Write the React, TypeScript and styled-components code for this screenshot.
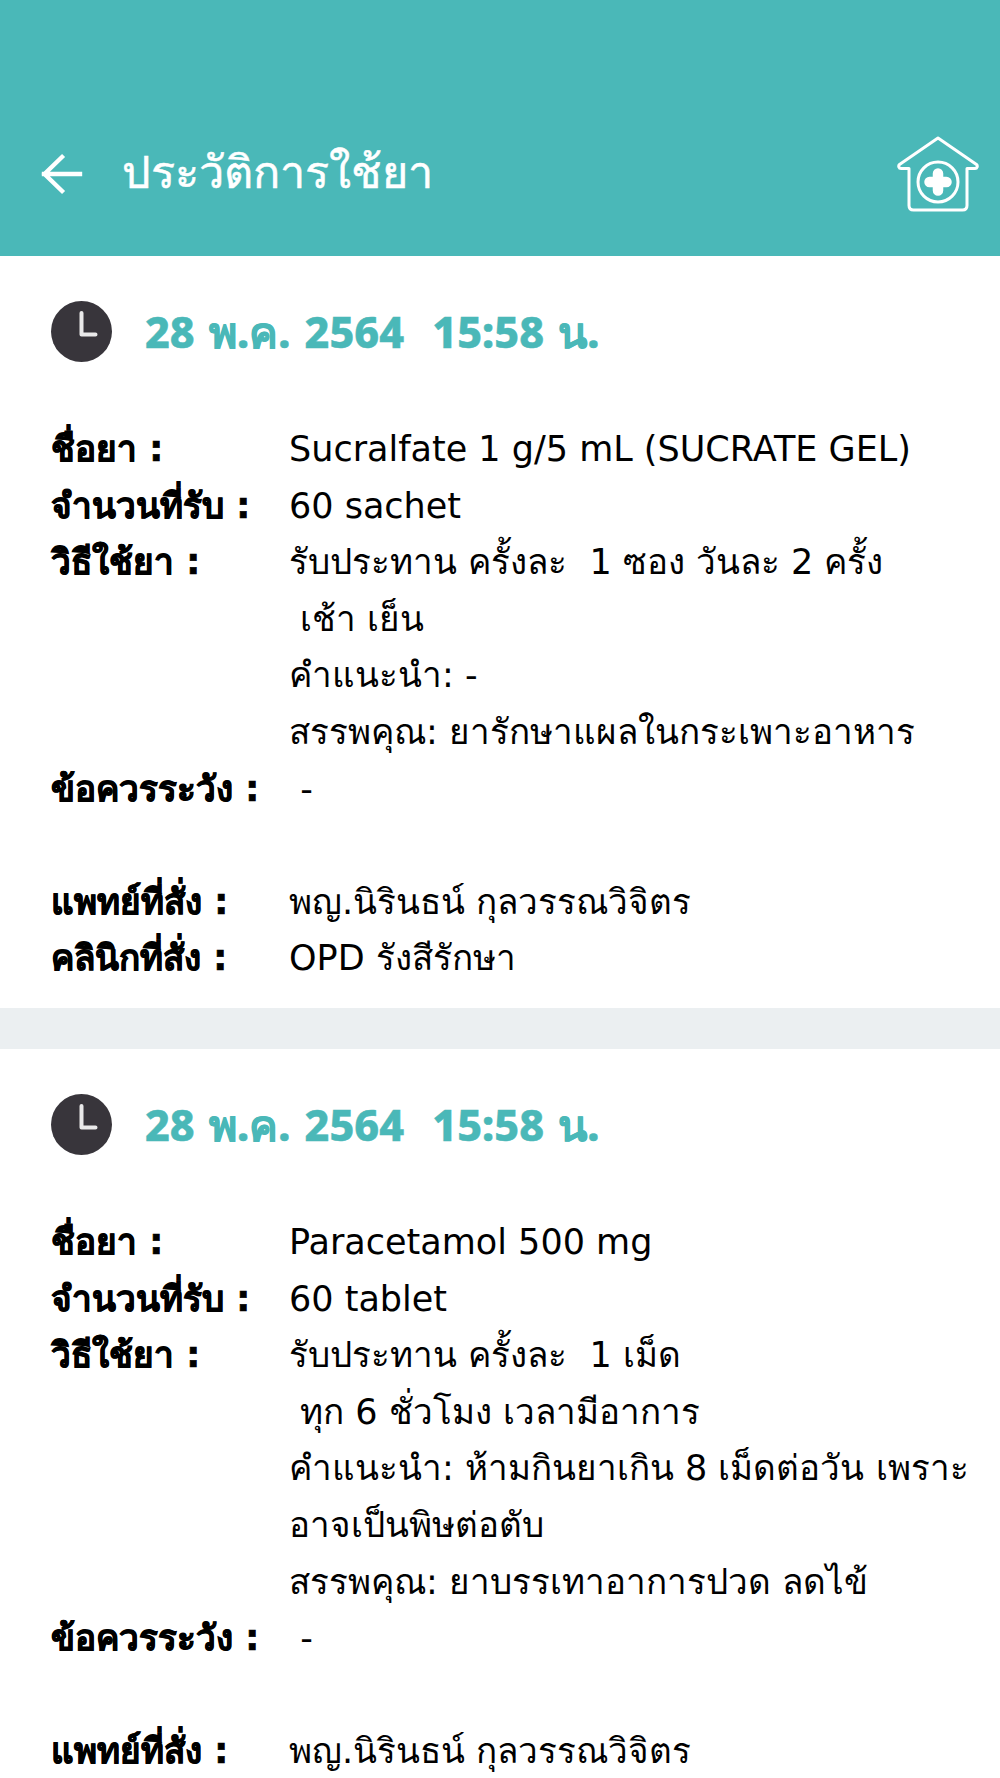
import styled, { createGlobalStyle } from 'styled-components';

const GlobalStyle = createGlobalStyle`
  html, body {
    margin: 0;
    padding: 0;
    background: #fff;
  }
  body {
    font-family: 'DejaVu Sans', 'Noto Sans', sans-serif;
    height: 1778px;
    overflow: hidden;
  }
`;

const Header = styled.header`
  display: flex;
  align-items: center;
  height: 256px;
  padding: 92px 21px 0 41px;
  box-sizing: border-box;
  background: #4ab8b8;
  color: #fff;
`;

const BackIcon = styled.svg`
  width: 42px;
  height: 42px;
  flex-shrink: 0;
`;

const Title = styled.h1`
  flex: 1;
  margin: 0 0 2px 39px;
  font-size: 45px;
  font-weight: 500;
  line-height: 64px;
  -webkit-text-stroke: 0.5px #fff;
`;

const HomeIcon = styled.svg`
  width: 82px;
  height: 76px;
  flex-shrink: 0;
`;

const Card = styled.section`
  padding: 45px 20px 21px 51px;
  background: #fff;
`;

const Divider = styled.div`
  height: 41px;
  background: #ebeff1;
`;

const DateRow = styled.div`
  display: flex;
  align-items: center;
  height: 61px;
  margin-bottom: 59px;
`;

const ClockIcon = styled.svg`
  width: 61px;
  height: 61px;
  flex-shrink: 0;
`;

const DateText = styled.div`
  margin-left: 33px;
  font-family: 'Noto Sans', sans-serif;
  font-size: 43px;
  font-weight: 800;
  line-height: 61px;
  word-spacing: 3px;
  color: #4ab8b8;
  white-space: pre;
  -webkit-text-stroke: 0.5px #4ab8b8;
`;

const Row = styled.div`
  display: grid;
  grid-template-columns: 238px 1fr;
  font-size: 35px;
  line-height: 56.6px;
  color: #000;
`;

const Label = styled.div`
  font-weight: 900;
  white-space: pre;
  -webkit-text-stroke: 0.7px #000;
`;

const Value = styled.div`
  font-weight: 400;
  white-space: pre;
`;

const Gap = styled.div`
  height: 56.6px;
`;

type Entry = {
  drug: string;
  amount: string;
  usage: string[];
  caution: string;
  doctor: string;
  clinic?: string;
};

const entries: Entry[] = [
  {
    drug: 'Sucralfate 1 g/5 mL (SUCRATE GEL)',
    amount: '60 sachet',
    usage: [
      'รับประทาน ครั้งละ  1 ซอง วันละ 2 ครั้ง',
      ' เช้า เย็น',
      'คำแนะนำ: -',
      'สรรพคุณ: ยารักษาแผลในกระเพาะอาหาร',
    ],
    caution: ' -',
    doctor: 'พญ.นิรินธน์ กุลวรรณวิจิตร',
    clinic: 'OPD รังสีรักษา',
  },
  {
    drug: 'Paracetamol 500 mg',
    amount: '60 tablet',
    usage: [
      'รับประทาน ครั้งละ  1 เม็ด',
      ' ทุก 6 ชั่วโมง เวลามีอาการ',
      'คำแนะนำ: ห้ามกินยาเกิน 8 เม็ดต่อวัน เพราะ',
      'อาจเป็นพิษต่อตับ',
      'สรรพคุณ: ยาบรรเทาอาการปวด ลดไข้',
    ],
    caution: ' -',
    doctor: 'พญ.นิรินธน์ กุลวรรณวิจิตร',
  },
];

const App = () => {
  return (
    <>
      <GlobalStyle />
      <Header>
        <BackIcon viewBox="0 0 42 42" fill="none" stroke="#fff" strokeWidth="4.4" strokeLinecap="square">
          <path d="M3 21h36M21 4 3.5 21 21 38" />
        </BackIcon>
        <Title>ประวัติการใช้ยา</Title>
        <HomeIcon viewBox="0 0 82 76" fill="none" stroke="#fff" strokeWidth="3" strokeLinejoin="round" strokeLinecap="round">
          <path d="M41 2 2.5 28.5c-1.4 1.2-.8 4 1.500 4H12v37c0 3 1.500 4.500 4.500 4.500h49c3 0 4.500-1.500 4.500-4.500v-37h8c2.300 0 2.900-2.800 1.500-4L41 2Z" />
          <circle cx="41" cy="46" r="20" />
          <path d="M41 37.500v17M32.500 46h17" strokeWidth="10.500" />
        </HomeIcon>
      </Header>
      {entries.map((entry, i) => (
        <div key={i}>
          <Card>
            <DateRow>
              <ClockIcon viewBox="0 0 61 61">
                <circle cx="30.500" cy="30.500" r="30.500" fill="#38353b" />
                <path d="M30.500 12v21.500h14" fill="none" stroke="#e9e9e9" strokeWidth="4" strokeLinecap="round" strokeLinejoin="round" />
              </ClockIcon>
              <DateText>28 พ.ค. 2564  15:58 น.</DateText>
            </DateRow>
            <Row>
              <Label>ชื่อยา :</Label>
              <Value>{entry.drug}</Value>
            </Row>
            <Row>
              <Label>จำนวนที่รับ :</Label>
              <Value>{entry.amount}</Value>
            </Row>
            <Row>
              <Label>วิธีใช้ยา :</Label>
              <Value>
                {entry.usage.map((line) => (
                  <div key={line}>{line}</div>
                ))}
              </Value>
            </Row>
            <Row>
              <Label>ข้อควรระวัง :</Label>
              <Value>{entry.caution}</Value>
            </Row>
            <Gap />
            <Row>
              <Label>แพทย์ที่สั่ง :</Label>
              <Value>{entry.doctor}</Value>
            </Row>
            {entry.clinic && (
              <Row>
                <Label>คลินิกที่สั่ง :</Label>
                <Value>{entry.clinic}</Value>
              </Row>
            )}
          </Card>
          {entry.clinic && <Divider />}
        </div>
      ))}
    </>
  );
};

export default App;
